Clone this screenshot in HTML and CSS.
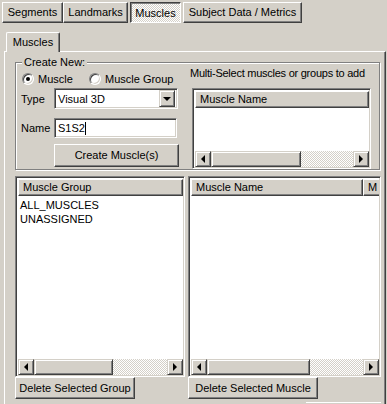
FILE: index.html
```html
<!DOCTYPE html>
<html lang="en">
<head>
<meta charset="UTF-8">
<title>Muscles</title>
<link rel="stylesheet" href="styles.css">
</head>
<body>
<div class="tabbar">
  <div class="ttab w-seg">Segments</div>
  <div class="ttab w-land">Landmarks</div>
  <div class="ttab w-mus pressed">Muscles</div>
  <div class="ttab w-subj">Subject Data / Metrics</div>
</div>

<div class="panel-wrap">
  <div class="inner-tabs">
    <div class="itab">Muscles</div>
  </div>
  <div class="panel">

    <div class="group">
      <div class="group-title">Create New:</div>
      <div class="group-left">
        <div class="radio-row">
          <div class="opt opt-first"><span class="radio checked"></span>Muscle</div>
          <div class="opt"><span class="radio"></span>Muscle Group</div>
        </div>
        <div class="field-row type-row">
          <span class="field-label">Type</span>
          <div class="combo">
            <span class="combo-text">Visual 3D</span>
            <span class="combo-btn"><span class="arrow-down"></span></span>
          </div>
        </div>
        <div class="field-row name-row">
          <span class="field-label">Name</span>
          <div class="edit">S1S2<span class="caret"></span></div>
        </div>
        <div class="btn create-btn">Create Muscle(s)</div>
      </div>
      <div class="group-right">
        <div class="hint">Multi-Select muscles or groups to add</div>
        <div class="list small-list">
          <div class="lhead">
            <div class="hcol col-small">Muscle Name</div>
          </div>
          <div class="lbody"></div>
          <div class="hscroll">
            <div class="sb-btn"><span class="arrow-left"></span></div>
            <div class="sb-thumb thumb-small"></div>
            <div class="sb-track"></div>
            <div class="sb-btn"><span class="arrow-right"></span></div>
          </div>
        </div>
      </div>
    </div>

    <div class="lower">
      <div class="lower-col col-groups">
        <div class="list big-list">
          <div class="lhead">
            <div class="hcol col-group">Muscle Group</div>
          </div>
          <div class="lbody">
            <div class="item">ALL_MUSCLES</div>
            <div class="item">UNASSIGNED</div>
          </div>
          <div class="hscroll">
            <div class="sb-btn"><span class="arrow-left"></span></div>
            <div class="sb-thumb thumb-groups"></div>
            <div class="sb-track"></div>
            <div class="sb-btn"><span class="arrow-right"></span></div>
          </div>
        </div>
        <div class="btn del-group">Delete Selected Group</div>
      </div>
      <div class="lower-col col-muscles">
        <div class="list big-list">
          <div class="lhead">
            <div class="hcol col-name">Muscle Name</div>
            <div class="hcol col-m">M</div>
          </div>
          <div class="lbody"></div>
          <div class="hscroll">
            <div class="sb-btn"><span class="arrow-left"></span></div>
            <div class="sb-thumb thumb-muscles"></div>
            <div class="sb-track"></div>
            <div class="sb-btn"><span class="arrow-right"></span></div>
          </div>
        </div>
        <div class="btn del-muscle">Delete Selected Muscle</div>
      </div>
    </div>

    <div class="stub"></div>
  </div>
</div>
</body>
</html>
```

FILE: styles.css
```css
body {
  margin: 0;
  width: 387px;
  height: 404px;
  overflow: hidden;
  background: #d4d0c8;
  font-family: "Liberation Sans", Arial, sans-serif;
  font-size: 11px;
  color: #000;
}

/* top button-style tabs */
.tabbar {
  display: flex;
  padding: 2px 0 0 2px;
  height: 21px;
}

.ttab {
  box-sizing: border-box;
  height: 21px;
  border: 1px solid;
  border-color: #fff #404040 #404040 #fff;
  box-shadow: inset -1px -1px 0 #808080;
  text-align: center;
  line-height: 18px;
  white-space: nowrap;
}

.w-seg { width: 61px; }
.w-land { width: 65px; margin-right: 2px; }
.w-mus { width: 51px; margin-right: 2px; }
.w-subj { width: 119px; }

.ttab.pressed {
  border-color: #404040 #fff #fff #404040;
  box-shadow: inset 1px 1px 0 #808080;
  background-color: #d4d0c8;
  background-image: repeating-conic-gradient(#fff 0 25%, #d4d0c8 0 50%);
  background-size: 2px 2px;
  line-height: 20px;
}

/* tab control */
.panel-wrap {
  margin-left: 4px;
  width: 382px;
}

.inner-tabs {
  display: flex;
  padding-left: 2px;
  margin-top: 9px;
  height: 19px;
}

.itab {
  box-sizing: border-box;
  width: 54px;
  height: 20px;
  border: 1px solid;
  border-color: #fff #404040 transparent #fff;
  border-bottom: none;
  border-radius: 2px 2px 0 0;
  box-shadow: inset -1px 0 0 #808080;
  background: #d4d0c8;
  text-align: center;
  line-height: 18px;
  position: relative;
  z-index: 1;
}

.panel {
  box-sizing: border-box;
  height: 360px;
  border-left: 1px solid #fff;
  border-top: 1px solid #fff;
  border-right: 1px solid #404040;
  box-shadow: inset -1px 0 0 #808080;
  padding: 10px 0 0 10px;
}

/* group box */
.group {
  position: relative;
  box-sizing: border-box;
  width: 365px;
  height: 108px;
  border: 1px solid #808080;
  box-shadow: 1px 1px 0 #fff, inset 1px 1px 0 #fff;
  display: flex;
}

.group-title {
  position: absolute;
  top: -7px;
  left: 6px;
  padding: 0 2px;
  background: #d4d0c8;
  line-height: 13px;
}

.group-left {
  width: 174px;
}

.radio-row {
  display: flex;
  margin-top: 10px;
  padding-left: 6px;
  height: 12px;
  line-height: 12px;
}

.opt {
  display: flex;
  align-items: center;
  white-space: nowrap;
}

.opt-first { width: 67px; }

.radio {
  box-sizing: border-box;
  width: 12px;
  height: 12px;
  margin-right: 4px;
  border-radius: 50%;
  border: 1px solid;
  border-color: #808080 #fff #fff #808080;
  box-shadow: inset 1px 1px 0 #404040, inset -1px -1px 0 #d4d0c8;
  background: #fff;
  display: flex;
  align-items: center;
  justify-content: center;
}

.radio.checked::after {
  content: "";
  width: 4px;
  height: 4px;
  border-radius: 50%;
  background: #000;
}

.field-row {
  display: flex;
  align-items: center;
  padding-left: 5px;
}

.type-row { margin-top: 3px; }
.name-row { margin-top: 9px; }

.field-label {
  width: 33px;
}

.combo {
  box-sizing: border-box;
  width: 124px;
  height: 21px;
  border: 1px solid;
  border-color: #808080 #fff #fff #808080;
  box-shadow: inset 1px 1px 0 #404040, inset -1px -1px 0 #d4d0c8;
  background: #fff;
  display: flex;
  align-items: center;
  padding: 2px;
}

.combo-text {
  flex: 1;
  padding-left: 1px;
}

.combo-btn,
.sb-btn {
  box-sizing: border-box;
  width: 16px;
  height: 16px;
  border: 1px solid;
  border-color: #d4d0c8 #404040 #404040 #d4d0c8;
  box-shadow: inset 1px 1px 0 #fff, inset -1px -1px 0 #808080;
  background: #d4d0c8;
  display: flex;
  align-items: center;
  justify-content: center;
}

.combo-btn { height: 17px; }

.arrow-down {
  width: 0;
  height: 0;
  border-left: 4px solid transparent;
  border-right: 4px solid transparent;
  border-top: 4px solid #000;
  margin-top: 1px;
}

.arrow-left {
  width: 0;
  height: 0;
  border-top: 4px solid transparent;
  border-bottom: 4px solid transparent;
  border-right: 4px solid #000;
}

.arrow-right {
  width: 0;
  height: 0;
  border-top: 4px solid transparent;
  border-bottom: 4px solid transparent;
  border-left: 4px solid #000;
}

.edit {
  box-sizing: border-box;
  width: 123px;
  height: 20px;
  border: 1px solid;
  border-color: #808080 #fff #fff #808080;
  box-shadow: inset 1px 1px 0 #404040, inset -1px -1px 0 #d4d0c8;
  background: #fff;
  padding: 0 3px;
  line-height: 18px;
  display: flex;
  align-items: center;
}

.caret {
  width: 1px;
  height: 13px;
  background: #000;
}

.btn {
  box-sizing: border-box;
  height: 22px;
  border: 1px solid;
  border-color: #fff #404040 #404040 #fff;
  box-shadow: inset -1px -1px 0 #808080;
  text-align: center;
  line-height: 20px;
  white-space: nowrap;
}

.create-btn {
  width: 125px;
  height: 23px;
  line-height: 21px;
  margin: 6px 0 0 38px;
}

.group-right {
  flex: 1;
}

.hint {
  margin-top: 4px;
  line-height: 13px;
  white-space: nowrap;
  letter-spacing: -0.25px;
}

.small-list {
  margin: 8px 0 0 2px;
  width: 179px;
  height: 81px;
}

/* list views */
.list {
  box-sizing: border-box;
  border: 1px solid;
  border-color: #808080 #fff #fff #808080;
  box-shadow: inset 1px 1px 0 #404040, inset -1px -1px 0 #d4d0c8;
  background: #fff;
  padding: 2px 1px 1px 2px;
  display: flex;
  flex-direction: column;
}

.lhead {
  display: flex;
  height: 17px;
  background: #d4d0c8;
  overflow: hidden;
}

.hcol {
  box-sizing: border-box;
  height: 17px;
  border: 1px solid;
  border-color: #fff #404040 #404040 #fff;
  box-shadow: inset -1px -1px 0 #808080;
  padding-left: 4px;
  line-height: 14px;
  white-space: nowrap;
  overflow: hidden;
  flex-shrink: 0;
}

.col-small { width: 174px; }
.col-group { width: 100%; }
.col-name { width: 172px; }
.col-m { width: 22px; }

.lbody {
  flex: 1;
  padding-top: 2px;
}

.item {
  line-height: 14px;
  padding-left: 2px;
}

.hscroll {
  display: flex;
  height: 16px;
}

.sb-thumb {
  box-sizing: border-box;
  height: 16px;
  border: 1px solid;
  border-color: #d4d0c8 #404040 #404040 #d4d0c8;
  box-shadow: inset 1px 1px 0 #fff, inset -1px -1px 0 #808080;
  background: #d4d0c8;
}

.thumb-small { width: 90px; }
.thumb-groups { width: 79px; }
.thumb-muscles { width: 103px; }

.sb-track {
  flex: 1;
  background-color: #d4d0c8;
  background-image: repeating-conic-gradient(#fff 0 25%, #d4d0c8 0 50%);
  background-size: 2px 2px;
}

/* lower lists */
.lower {
  display: flex;
  gap: 3px;
  margin-top: 6px;
}

.col-groups { width: 170px; }
.col-muscles { width: 193px; }

.big-list {
  height: 201px;
}

.del-group { width: 120px; }
.del-muscle { width: 130px; }

.stub {
  margin: 3px 0 0 291px;
  width: 75px;
  height: 4px;
  border-top: 1px solid #fff;
}
```
